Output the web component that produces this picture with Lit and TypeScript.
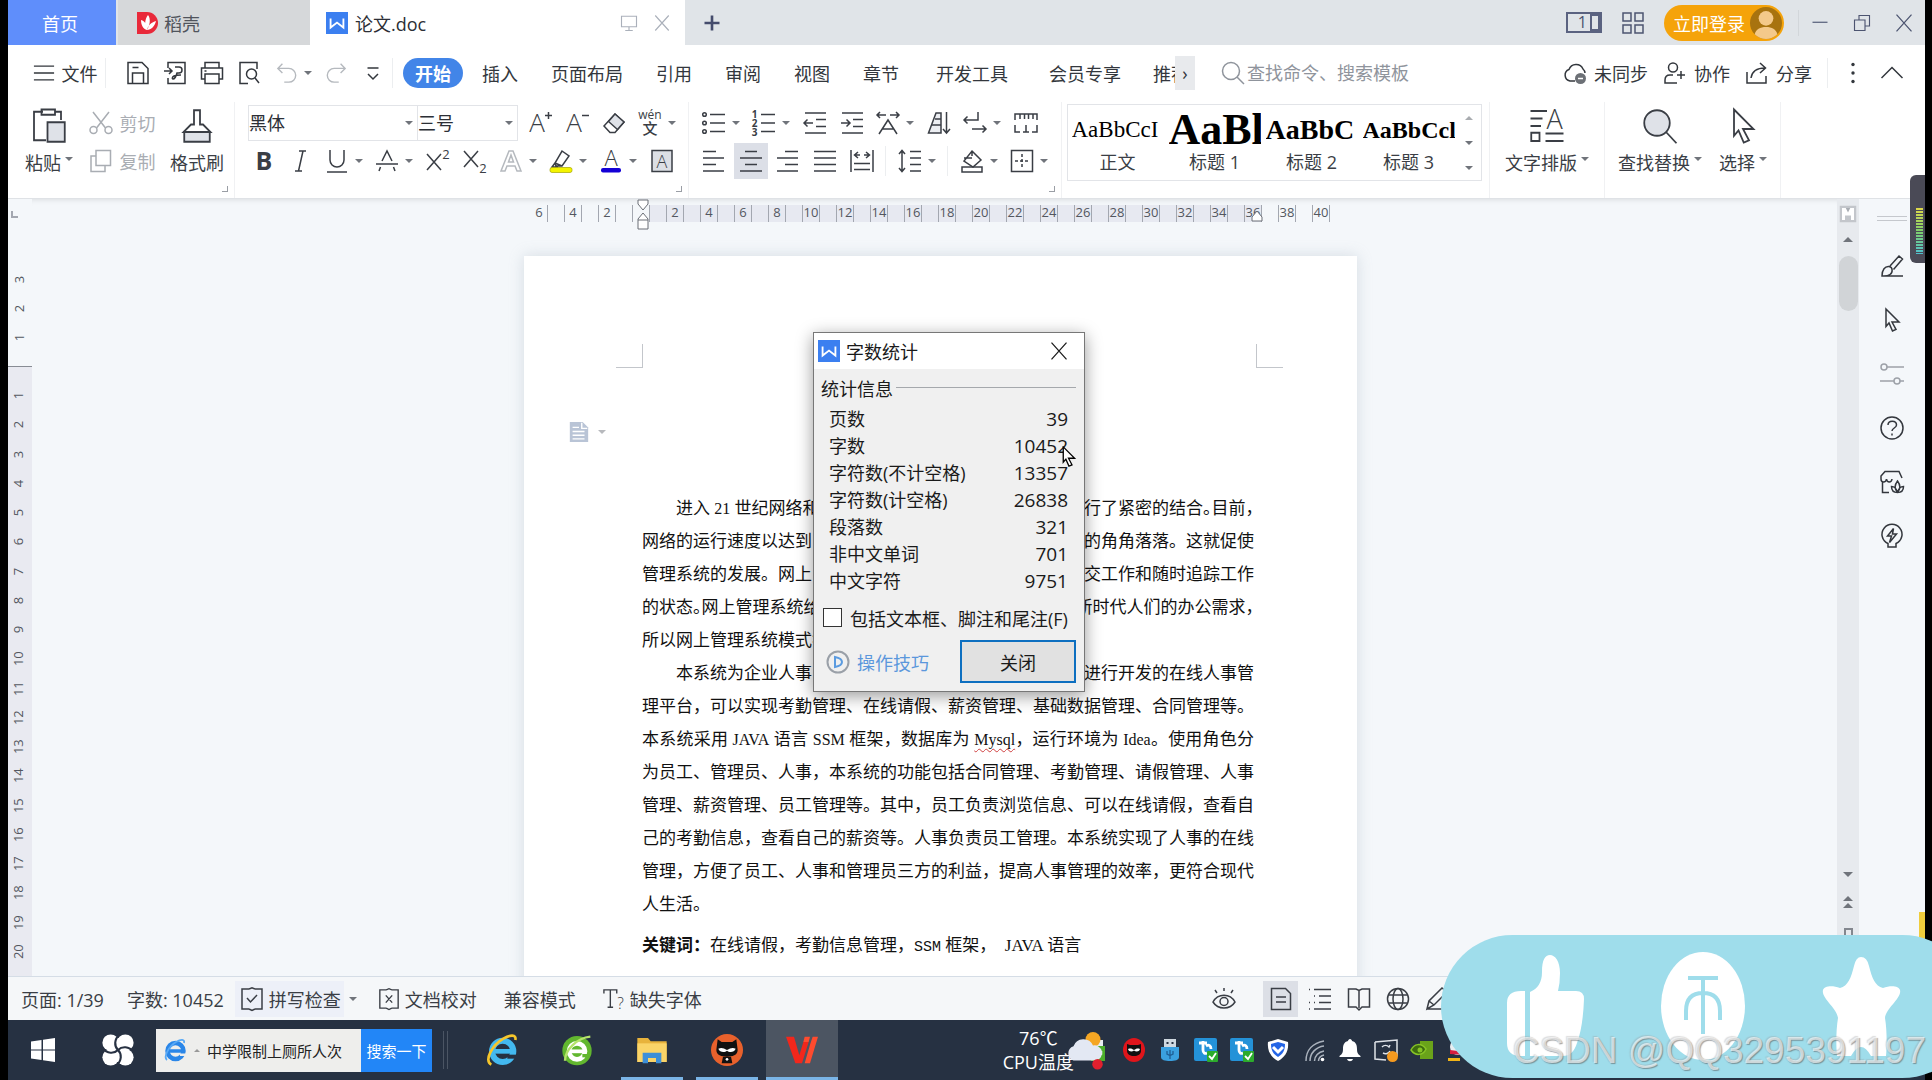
import { LitElement, html, css, svg, nothing, TemplateResult } from "lit";
import { customElement, property } from "lit/decorators.js";

const T = (x: number, y: number, size: number, s: string, extra = "") =>
  svg`<text class=${"gt " + extra} x=${x} y=${y} font-size=${size} text-anchor="middle">${s}</text>`;

const icons: Record<string, unknown> = {
  burger: svg`<path d="M1 4.500h22M1 12h22M1 19.500h22"/>`,
  save: svg`<path d="M2 1.500h14l6 6V22.500H2zM6.500 22V12h11v10M6.500 6.500h6"/>`,
  pdf: svg`<path d="M5 7V1.500h17v21H5V17M1 10h8M6 7l3 3-3 3M12 6h4a3 3 0 0 1 0 6h-2c-1 4-3 6-4 6s-1-2 1-3 4-1 7-1"/>`,
  print: svg`<path d="M5 7V1.500h14V7M5 18H1.500V7h21v11H19M5 13h14v9.500H5zM4.500 10h2"/>`,
  preview: svg`<path d="M20 8V1.500H3v21h8"/><circle cx="14.500" cy="13" r="5"/><path d="M18 17l4 5"/>`,
  undo: svg`<path d="M7 2L2 7l5 5M2 7h12a7 7 0 0 1 0 15H9"/>`,
  redo: svg`<path d="M17 2l5 5-5 5M22 7H10a7 7 0 0 0 0 15h5"/>`,
  more: svg`<path d="M6.500 7h11M7 13l5 5 5-5"/>`,
  search: svg`<circle cx="10" cy="10" r="8.500"/><path d="M16 16l7 7"/>`,
  cloud: svg`<path d="M12 20H7a6 6 0 0 1-1-11.500A7.500 7.500 0 0 1 20 8a6 6 0 0 1 2 4"/><circle cx="17.500" cy="17.500" r="5.500" fill="#6c7076" stroke="none"/><path d="M15 17.500h5" stroke="#fff"/>`,
  people: svg`<circle cx="10" cy="6.500" r="4.500"/><path d="M14 22H2v-3c0-3 2-5 5-5h3M18 10v8M14 14h8"/>`,
  share: svg`<path d="M2 11v11h19v-7M6 17c1-7 6-10 14-10M15 2l5.500 5-5.500 5"/>`,
  dots: svg`<g fill="currentColor" stroke="none"><circle cx="12" cy="3.500" r="1.700"/><circle cx="12" cy="12" r="1.700"/><circle cx="12" cy="20.500" r="1.700"/></g>`,
  chevUp: svg`<path d="M1.500 17L12 6.500 22.500 17"/>`,
  paste: svg`<path d="M8 2.500H2v19h8M16 2.500h4V8M7 1h9v3.500H7z"/><path d="M11 9.500h11.500v13H11z" fill="#dfe2e8"/>`,
  cut: svg`<path d="M4 1l12.500 16M20 1L7.500 17"/><circle cx="4.500" cy="19" r="3.500"/><circle cx="19.500" cy="19" r="3.500"/>`,
  copy: svg`<path d="M7 1.500h14.500v15H7z"/><path d="M7 7H2v15.500h14V17"/>`,
  brush: svg`<path d="M10 1.500h4V11h2l5 5H3l5-5h2z"/><path d="M3.500 16h17v6.500h-17z" fill="#dfe2e8"/>`,
  aPlus: svg`${T(9, 21, 26, "A")}<path d="M17 4.500h7M20.500 1v7"/>`,
  aMinus: svg`${T(9, 21, 26, "A")}<path d="M17 4.500h7"/>`,
  eraser: svg`<path d="M13 3l9 8-9 10.500H8L2 15z"/><path d="M13 3l9 8-6.500 7.500-9-8z" fill="#dfe2e8"/>`,
  wen: svg`${T(12, 8, 12, "wén", "md")}${T(12, 23, 15, "文", "md")}`,
  bold: T(12, 21, 25, "B", "bd"),
  italic: svg`<path d="M10 2h7M6 22h7M14 2L9.500 22"/>`,
  under: svg`<path d="M5 1v10a7 7 0 0 0 14 0V1M2 23h20"/>`,
  strike: svg`<path d="M7 12L12 2l5 10M1 15h22M5.500 18L4 22M18.500 18l1.500 4"/>`,
  sup: svg`<path d="M1 5l14 16M15 5L1 21"/>${T(20, 10, 13, "2", "md")}`,
  sub: svg`<path d="M1 2l14 16M15 2L1 18"/>${T(20, 24, 13, "2", "md")}`,
  outA: svg`<path d="M2 22L10 2h4l8 20h-4l-2-5H8l-2 5zM9.500 13h5L12 6z"/>`,
  hilite: svg`<path d="M13 2l7 5-7 10H7l-1-3zM6 14l7 3M6 14l-3 4h6"/><rect x="1" y="18.500" width="22" height="5" rx="2" fill="#f4f400" stroke="#a5a500" stroke-width=".7"/>`,
  fontColor: svg`${T(12, 17, 22, "A")}<rect x="2" y="19" width="20" height="4.500" rx="2" fill="#1400d6" stroke="none"/>`,
  boxA: svg`<rect x="2" y="1.500" width="20" height="21" fill="#dcdfe5"/>${T(12, 18.500, 18, "A")}`,
  bullets: svg`<circle cx="2.500" cy="3.500" r="1.800"/><circle cx="2.500" cy="12" r="1.800"/><circle cx="2.500" cy="20.500" r="1.800"/><path d="M8 3.500h15M8 12h15M8 20.500h15"/>`,
  numbers: svg`${T(2.500, 7, 10, "1", "bd")}${T(2.500, 16, 10, "2", "bd")}${T(2.500, 24.500, 10, "3", "bd")}<path d="M9 3.500h14M9 12h14M9 20.500h14"/>`,
  outdent: svg`<path d="M2 2h21M13 8.500h10M13 15.500h10M2 22h21M1 12h9M4.500 8.500L1 12l3.500 3.500"/>`,
  indent: svg`<path d="M2 2h21M13 8.500h10M13 15.500h10M2 22h21M1 12h9M6.500 8.500L10 12l-3.500 3.500"/>`,
  scaleA: svg`<path d="M1 4h9M14 4h9M4 1L1 4l3 3M20 1l3 3-3 3M3 23L12 9l9 14M6.500 18h11"/>`,
  sort: svg`<path d="M1.500 22L9 2h5v20z" fill="#eceef2"/><path d="M8 8h6M5 14h9M19.500 1v21M16 18l3.500 4 3.500-4"/>`,
  tabs: svg`<path d="M15 1v8H1M4.500 5.500L1 9l3.500 3.500M9 18h14M19.500 14.500L23 18l-3.500 3.500"/>`,
  rulerI: svg`<path d="M1 9V3h22v6M6 3v5M10.500 3v5M14.500 3v5M19 3v5M1 14v7h5M23 14v7h-5M9 21h6M12 14v7"/>`,
  aLeft: svg`<path d="M1 2.500h13M1 9h21M1 15.500h13M1 22h21"/>`,
  aCenter: svg`<path d="M6 2.500h12M1 9h22M6 15.500h12M1 22h22"/>`,
  aRight: svg`<path d="M9 2.500h13M1 9h21M9 15.500h13M1 22h21"/>`,
  aJust: svg`<path d="M1 2.500h22M1 9h22M1 15.500h22M1 22h22"/>`,
  aDist: svg`<path d="M1 1v22M23 1v22M4 14.500h16M4 20.500h16M5 6h5M14 6h5M8 3L4.500 6 8 9M16 3l3.500 3L16 9"/>`,
  lineSp: svg`<path d="M4 2v20M1 5l3-3.500L7 5M1 19l3 3.500L7 19M12 2.500h11M12 9h11M12 15.500h11M12 22h11"/>`,
  fill: svg`<path d="M12 2l9 9-8 7-9-6zM4 9h8M12 2v5"/><path d="M2 18h20v5H2z"/>`,
  border: svg`<rect x="1.500" y="1.500" width="21" height="21"/><path d="M12 5v14M5 12h14" stroke-dasharray="3 2"/>`,
  textLayout: svg`<path d="M1 2h11M1 7h8M1 12h7M1.500 16.500h5.500v5.500H1.500zM11 17h12M11 22h12"/>${T(17, 14, 18, "A")}`,
  find: svg`<circle cx="10" cy="10" r="8.500" fill="#dfe2e8"/><path d="M16 16l7 7.500"/>`,
  arrow: svg`<path d="M6 1l13 13h-7l4 7.500-3.500 1.500-3.500-8-3 3.500z"/>`,
  monitor: svg`<path d="M2 3h20v14H2zM12 17v5M7 22h10"/>`,
  close: svg`<path d="M3 2l18 20M21 2L3 22"/>`,
  plus: svg`<path d="M12 2v20M2 12h20" stroke-width="3.500"/>`,
  grid: svg`<path d="M2 2h8v8H2zM14 2h8v8h-8zM2 14h8v8H2zM14 14h8v8h-8z"/>`,
  min: svg`<path d="M2 11h20"/>`,
  restore: svg`<path d="M2 8h14v14H2zM8 8V2h14v14h-6"/>`,
  wdoc: svg`<path d="M0 0h24v24H0z" fill="#3b7ff0" stroke="none"/><path d="M5 7v10l7-5.500 7 5.500V7" stroke="#fff" stroke-width="2"/>`,
  docer: svg`<path d="M1 1h10a11 11 0 0 1 0 22H1z" fill="#e9293a" stroke="none"/><path d="M12 4c3 4 2 10-1 15-3-5-2-11 1-15zM5 9c4 1 6 5 6 10-4-1-6-5-6-10zM20 10c-4 1-8 4-9 9 4 0 8-4 9-9z" fill="#fff" stroke="none"/>`,
  avatar: svg`<circle cx="12" cy="12" r="12" fill="#a8730f" stroke="none"/><circle cx="12" cy="8.500" r="5.500" fill="#f4c98a" stroke="none"/><path d="M3.500 20.500c1-4 4-5.500 8.500-5.500s7.500 1.500 8.500 5.500A12 12 0 0 1 3.500 20.500z" fill="#f4c98a" stroke="none"/>`,
  pen: svg`<path d="M2 22h21M10 12L19 2l3.500 3L13.500 15.500M2 22c0-6 3-10 7-9.500s4 6 1 8-6 1.500-8 1.500z"/>`,
  sliders: svg`<circle cx="4" cy="5" r="3"/><path d="M7 5h17M0 19h14"/><circle cx="17" cy="19" r="3"/><path d="M20 19h4"/>`,
  help: svg`<circle cx="12" cy="12" r="11"/><path d="M8 9c0-5 8.500-5 8.500 0 0 3-4.500 3-4.500 6"/><path d="M12 17.500v2"/>`,
  shop: svg`<path d="M22 8l-3-6.500H5L1 6v3c0 4 5 4 5.500 0 .5 4 5 4 5.500 0M2.500 12v10.500H9"/><path d="M17.500 22c-3-3-3-7 0-11 3 4 3 8 0 11zM17.500 22.500c-4 0-6-2-6-6 3 0 5 2 6 6zM17.500 22.500c4 0 6-2 6-6-3 0-5 2-6 6z"/>`,
  bulb: svg`<path d="M8 23v-3.500a10 10 0 1 1 8 0V23zM13.500 4.500L7.500 12h4l-2 6.500 7-8.500h-4z"/>`,
  check: svg`<path d="M9 2H2v20h7M15 2h7v20h-7M9 22l3 1.500L15 22M9 2l3-1.200L15 2M7 11l3.500 4L17 8"/>`,
  proof: svg`<path d="M9 2H2v20h7M15 2h7v20h-7M9 22l3 1.500L15 22M9 2l3-1.200L15 2M8.500 8l7 8M15.500 8l-7 8"/>`,
  missing: svg`<path d="M1 6V2h14v4M8 2v19M5 21h6"/>${T(19, 23, 17, "?")}`,
  eye: svg`<path d="M1 15c5-9 17-9 22 0-5 8-17 8-22 0z"/><circle cx="12" cy="14.500" r="4"/><path d="M12 1v3M3 3l2 3M21 3l-2 3"/>`,
  page: svg`<path d="M2.500 1.500h14l5 5v16h-19zM7 10h10M7 15h10"/>`,
  list: svg`<path d="M1 2.500h1M6 2.500h17M6 9h1M11 9h12M1 15.500h1M6 15.500h1M11 15.500h12M1 22h1M6 22h17"/>`,
  book: svg`<path d="M12 3v18M1.500 2H9l3 1.500L15 2h7.500v18H15l-3 3-3-3H1.500z"/>`,
  globe: svg`<circle cx="12" cy="12" r="10.500"/><ellipse cx="12" cy="12" rx="5" ry="10.500"/><path d="M2.500 8h19M2.500 16h19"/>`,
  pencil: svg`<path d="M2 22h21M2 22l2-8L17 1l5 4L9 18zM4 14l5 4"/>`,
  play: svg`<circle cx="12" cy="12" r="10.500" stroke="#9aa0a8" stroke-width="2"/><path d="M9 7c5 1 7 3 7 5s-2 4-7 5z" stroke="#5b9be0" stroke-width="2"/>`,
  floatDoc: svg`<path d="M2 1h14l6 6v16H2z" fill="#b9c4d6" stroke="none"/><path d="M15 2v6h6M5 7h7M5 11.500h13M5 15.500h13M5 19.500h13" stroke="#fff"/>`,
  rulerBtn: svg`<rect x="1" y="1" width="22" height="22" fill="#c3c6cb" stroke="none"/><path d="M4 4h16v16h-4v-6H8v6H4z" fill="#fff" stroke="none"/><path d="M9 4h6l-3 6z" fill="#a9adb3" stroke="none"/>`,
  win: svg`<path d="M0 3.500l10.500-1.500V11.500H0zM12 1.800L24 0v11.500H12zM0 12.500h10.500V22L0 20.500zM12 12.500h12V24l-12-1.800z" fill="#fff" stroke="none"/>`,
  fan: svg`<g fill="#fff" stroke="none"><circle cx="6.500" cy="6.500" r="6.200"/><circle cx="17.500" cy="6.500" r="6.200"/><circle cx="17.500" cy="17.500" r="6.200"/><circle cx="6.500" cy="17.500" r="6.200"/><path d="M6 3h12v18H6z"/></g>
    <g stroke="#273142" stroke-width="1.600">${[0, 90, 180, 270].map((a) => svg`<path transform=${`rotate(${a} 12 12)`} d="M12 12C9 9 9 4 13.500 0"/>`)}</g>`,
  ie: svg`<ellipse cx="12.500" cy="13" rx="8" ry="8" stroke="#43b9f0" stroke-width="4.500"/><path d="M6 13h16" stroke="#43b9f0" stroke-width="3.500"/><path d="M16 15.500h8v3h-8z" fill="#273142" stroke="none"/><path d="M4 23C-2 20 5 8 13 3.500c5-3 10-3.500 9 1" stroke="#f6c62b" stroke-width="2"/>`,
  ieLite: svg`<ellipse cx="12.500" cy="13" rx="8" ry="8" stroke="#2a86e8" stroke-width="4.500"/><path d="M6 13h16" stroke="#2a86e8" stroke-width="3.500"/><path d="M17 15.500h7v2.500h-7z" fill="#eeeeec" stroke="none"/><path d="M4 22C0 19 6 8 13 4c5-3 9-3 8 1" stroke="#58a9f5" stroke-width="1.800"/>`,
  ge: svg`<circle cx="12" cy="12.500" r="11" fill="#62b72f" stroke="none"/><circle cx="12" cy="13" r="6" stroke="#fff" stroke-width="3.500"/><path d="M7 13h12" stroke="#fff" stroke-width="2.800"/><path d="M16 15h5v2.500h-5z" fill="#62b72f" stroke="none"/><path d="M3 20C3 12 12 3 22 2" stroke="#b5e36b" stroke-width="1.800"/>`,
  folder: svg`<path d="M1 3h8l2 2.500h12V21H1z" fill="#e8b33c" stroke="none"/><path d="M1 7h22v14H1z" fill="#fad468" stroke="none"/><path d="M5 22v-8h14v8h-4v-4H9v4z" fill="#3d8fd8" stroke="none"/>`,
  cat: svg`<ellipse cx="12" cy="12" rx="12" ry="12" fill="#e8612c" stroke="none"/><path d="M5 4l3 2h8l3-2 1 8c0 4-4 5-8 5s-8-1-8-5z" fill="#111" stroke="none"/><path d="M5.500 11c3-1 4 0 6.500 1 2.500-1 3.500-2 6.500-1-1 3-5 3-6.500 1.500C10.500 14 6.500 14 5.500 11z" fill="#fff" stroke="none"/><path d="M9 17h6l1 5H8z" fill="#111" stroke="none"/><circle cx="12" cy="19" r="1" fill="#fff" stroke="none"/>`,
  wps: svg`<path d="M0 2h6l4 14 3-10h4l-5 16H7z" fill="#f2271c" stroke="none"/><path d="M14 2h4l-1 4h-4zM18 8l2-6h4l-6 20h-4z" fill="#ff4b2e" stroke="none"/>`,
  weather: svg`<circle cx="18" cy="5" r="5" fill="#f5a623" stroke="none"/><path d="M5 19a5 5 0 0 1 0-9.500A7 7 0 0 1 18 9a5 5 0 0 1 2 10z" fill="#e3e8f3" stroke="none"/><circle cx="21" cy="21.500" r="3.500" fill="#e0202e" stroke="none"/>`,
  usbG: svg`<path d="M7 2h10v6H7z" fill="#e9edf0" stroke="none"/><path d="M5 8h14v15H5z" fill="#4caf2c" stroke="none"/><path d="M12 20v-9M8.500 13v3l3.500 2 3.500-2v-3" stroke="#fff"/>`,
  red: svg`<ellipse cx="12" cy="12" rx="11" ry="12" fill="#e0151b" stroke="none"/><path d="M5 6l3 1h8l3-1v7c0 3-3 5-7 5s-7-2-7-5z" fill="#111" stroke="none"/><path d="M6 11c3-1 4 0 6 1 2-1 3-2 6-1-1 3-4 3-6 1.500C10 14 7 14 6 11z" fill="#fff" stroke="none"/>`,
  usbB: svg`<path d="M6 1h12v8H6z" fill="#cfd8e0" stroke="none"/><path d="M8.500 4h2v2h-2zM13.500 4h2v2h-2z" fill="#273142" stroke="none"/><path d="M3 9h18v10c0 3-4 4-9 4s-9-1-9-4z" fill="#3aa0e0" stroke="none"/><path d="M12 21v-9M9 13v3l3 1.500 3-1.500v-3" stroke="#1f5f96" stroke-width="1.300"/>`,
  tBlue: svg`<rect x="0" y="0" width="23" height="23" rx="2" fill="#2492d8" stroke="none"/><path d="M5 5h8M9 3v9c0 3 2 4 4 3M12 8c3-2 5 0 5 3" stroke="#fff" stroke-width="2.800"/><rect x="13" y="13" width="11" height="11" rx="1" fill="#2cab2c" stroke="none"/><path d="M15 18l3 3 4-6" stroke="#fff" stroke-width="1.800"/>`,
  shield: svg`<path d="M12 1l10 3c1 9-3 15-10 19C5 19 1 13 2 4z" fill="#fff" stroke="none"/><path d="M12 4l7 2c0 6-2 10-7 13-5-3-7-7-7-13z" fill="#2465e6" stroke="none"/><path d="M7 9l5 5 5-5" stroke="#fff" stroke-width="3"/>`,
  wifi: svg`<path d="M4 23C4 12 11 5 22 3M8 23C8 15 14 9 22 8M12.500 23c0-5 4-9 9.500-10M16.500 23c0-3 2-5 5.500-6" stroke="#aab2bd"/><circle cx="20.500" cy="21.500" r="1.800" fill="#fff" stroke="none"/>`,
  bell: svg`<path d="M12 1c1 0 2 1 2 2 4 1 5 4 5 8 0 4 1 5 3.500 7v1h-21v-1C4 16 5 15 5 11c0-4 1-7 5-8 0-1 1-2 2-2zM9 21h6c-1 3-5 3-6 0z" fill="#fff" stroke="none"/>`,
  sync: svg`<path d="M1 4l22-2v16M1 4v17l11 1M8 9a5 5 0 0 1 7 0l1-2M16 13a5 5 0 0 1-7 2" stroke="#dfe3e8"/><circle cx="18.500" cy="18.500" r="5.500" fill="#f59a1f" stroke="none"/>`,
  nv: svg`<path d="M10 3h13v18H10z" fill="#6aa31a" stroke="none"/><path d="M1 12c3-6 10-8 15-1-3 7-11 7-15 1z" fill="#3d6b0f" stroke="#86c425"/><circle cx="10" cy="12" r="2.500" fill="#86c425" stroke="none"/>`,
  qq: svg`<circle cx="12" cy="9" r="8" fill="#e8eef2" stroke="none"/><path d="M4 12l16 2v3L4 16z" fill="#d81e3f" stroke="none"/><path d="M2 20h12v3H2z" fill="#f2b417" stroke="none"/>`,
};

const icon = (name: string, size = "") =>
  html`<svg class=${"ic " + size} viewBox="0 0 24 24" aria-hidden="true">${icons[name]}</svg>`;

const shared = css`
  * { box-sizing: border-box; }
  .ic { width: 24px; height: 24px; flex: none; fill: none; stroke: currentColor; stroke-width: 1.500; display: block; overflow: visible; }
  .s16 { width: 16px; height: 16px; }
  .s18 { width: 18px; height: 18px; }
  .s20 { width: 20px; height: 20px; }
  .s22 { width: 22px; height: 22px; }
  .s28 { width: 28px; height: 28px; }
  .s32 { width: 32px; height: 32px; }
  .s36 { width: 36px; height: 36px; stroke-width: 1.200; }
  .gt { fill: currentColor; stroke: none; font-family: "Open Sans", "Noto Sans CJK SC", sans-serif; font-weight: 300; }
  .gt.md { font-weight: 500; }
  .gt.bd { font-weight: 700; }
  button, select, input { font: inherit; color: inherit; margin: 0; }
  button { border: 0; background: none; padding: 0; display: flex; align-items: center; justify-content: center; white-space: nowrap; }
  .caret { flex: none; width: 0; height: 0; border: 4px solid transparent; border-top-color: #70747b; border-bottom: 0; }
  .sep { flex: none; width: 1px; background: #eceef0; }
`;

@customElement("wp-title-bar")
class TitleBar extends LitElement {
  static styles = [shared, css`
    :host { display: flex; height: 45px; background: #e0e4e8; color: #4c5470; }
    .tab { height: 45px; font-size: 18px; }
    .home { width: 108px; background: #5f8efb; color: #fff; padding-right: 4px; }
    .docer { width: 192px; margin-left: 2px; padding-left: 18px; gap: 4px; background: #d6d8da; justify-content: flex-start; color: #50545c; }
    .doc { width: 375px; background: #fff; display: flex; align-items: center; padding: 0 14px 0 16px; color: #2c2f36; }
    .doc span { margin-left: 7px; flex: 1; }
    .doc button { margin-left: 15px; color: #aab0ba; }
    .add { margin-left: 18px; color: #454c6c; }
    .fill { flex: 1; }
    .right { display: flex; align-items: center; }
    .count { width: 36px; height: 21px; border: 2px solid #5a6280; font-size: 16px; justify-content: flex-end; line-height: 17px; }
    .count i { width: 10px; height: 17px; border: 2px solid #5a6280; margin-left: 3px; }
    .gridb { margin-left: 19px; }
    .login { margin: 0 14px 0 19px; height: 36px; border-radius: 18px; background: #f5a30a; color: #fff; font-size: 18px; padding: 0 2px 0 9px; gap: 5px; }
    .winb { width: 42px; }
    .close { padding-right: 1px; }
    .sep { height: 26px; background: #d2d6da; }
  `];
  render() {
    return html`
      <button class="tab home">首页</button>
      <button class="tab docer">${icon("docer")}稻壳</button>
      <div class="tab doc">${icon("wdoc", "s22")}<span>论文.doc</span>
        <button aria-label="窗口">${icon("monitor", "s18")}</button>
        <button aria-label="关闭标签">${icon("close", "s18")}</button></div>
      <button class="add" aria-label="新建">${icon("plus", "s18")}</button>
      <div class="fill"></div>
      <div class="right">
        <button class="count" aria-label="窗口数">1<i></i></button>
        <button class="gridb" aria-label="应用">${icon("grid")}</button>
        <button class="login">立即登录${icon("avatar", "s32")}</button>
        <span class="sep"></span>
        <button class="winb" aria-label="最小化">${icon("min", "s18")}</button>
        <button class="winb" aria-label="还原">${icon("restore", "s18")}</button>
        <button class="winb close" aria-label="关闭">${icon("close", "s20")}</button>
      </div>`;
  }
}

@customElement("wp-menu-bar")
class MenuBar extends LitElement {
  static styles = [shared, css`
    :host { display: flex; align-items: center; height: 57px; background: #fff; font-size: 18px; color: #33373d; padding-bottom: 2px; }
    .file { margin-left: 17px; gap: 7px; width: 80px; }
    .quick { display: flex; padding-left: 13px; width: 286px; }
    .sep { height: 30px; }
    .quick button { width: 37px; }
    .quick .ud { gap: 6px; padding-left: 3px; width: 50px; color: #b5b9be; }
    .quick .rd { color: #b5b9be; }
    .on { flex: none; width: 60px; height: 30px; border-radius: 15px; background: #4285e8; color: #fff; font-weight: 700; margin: 0 3px 0 10px; }
    .tabs { display: flex; gap: 1px; }
    .tab { padding: 0 16px; height: 34px; }
    .wide { padding: 0 20px; }
    .cut { flex: none; width: 34px; padding: 0 0 0 12px; overflow: hidden; justify-content: flex-start; }
    .next { flex: none; width: 20px; height: 34px; background: #e8eaed; }
    .search { display: flex; align-items: center; gap: 2px; margin-left: 26px; color: #8f949c; }
    .search input { border: 0; outline: 0; width: 200px; padding: 0; background: none; }
    .search input::placeholder { color: #8f949c; opacity: 1; }
    .fill { flex: 1; }
    .act { gap: 7px; margin-right: 15px; }
    .dots { width: 50px; }
    .up { width: 28px; margin-right: 19px; }
  `];
  render() {
    const q = [["save", "保存"], ["pdf", "输出PDF"], ["print", "打印"], ["preview", "预览"]];
    return html`
      <button class="file">${icon("burger", "s22")}文件</button><span class="sep"></span>
      <div class="quick">
        ${q.map(([n, l]) => html`<button aria-label=${l}>${icon(n)}</button>`)}
        <button class="ud" aria-label="撤销">${icon("undo", "s22")}<i class="caret"></i></button>
        <button class="rd" aria-label="恢复">${icon("redo", "s22")}</button>
        <button aria-label="更多">${icon("more")}</button>
      </div><span class="sep"></span>
      <button class="on">开始</button>
      <div class="tabs">
        ${["插入", "页面布局", "引用", "审阅", "视图", "章节"].map((t) => html`<button class="tab">${t}</button>`)}
        ${["开发工具", "会员专享"].map((t) => html`<button class="tab wide">${t}</button>`)}
      </div>
      <button class="tab cut">推荐</button>
      <button class="next" aria-label="更多选项卡">›</button>
      <label class="search">${icon("search")}<input placeholder="查找命令、搜索模板" aria-label="搜索" /></label>
      <div class="fill"></div>
      <button class="act">${icon("cloud")}未同步</button>
      <button class="act">${icon("people")}协作</button>
      <button class="act">${icon("share")}分享</button>
      <span class="sep"></span>
      <button class="dots" aria-label="更多">${icon("dots")}</button>
      <button class="up" aria-label="收起">${icon("chevUp")}</button>`;
  }
}

@customElement("wp-ribbon")
class Ribbon extends LitElement {
  static styles = [shared, css`
    :host { display: flex; height: 97px; background: #fff; color: #3a3e45; font-size: 18px; border-bottom: 1px solid #dfe2e6; }
    .group { display: flex; border-right: 1px solid #f0f1f3; position: relative; flex: none; }
    .corner { position: absolute; right: 6px; bottom: 6px; width: 6px; height: 6px; border: solid #9a9ea5; border-width: 0 1px 1px 0; }
    .big { flex-direction: column; justify-content: flex-start; padding-top: 4px; }
    .big .pic { height: 40px; display: flex; align-items: center; }
    .big .lab { height: 32px; display: flex; align-items: center; gap: 4px; }
    .big .lab .caret { margin-bottom: 6px; }
    .clip { width: 227px; padding-left: 17px; }
    .pair { width: 66px; margin: 0 15px 0 16px; }
    .pair button { height: 38px; gap: 7px; color: #a9adb3; }
    .rows { display: flex; flex-direction: column; padding-top: 2px; }
    .row { display: flex; height: 38px; align-items: center; }
    .font { width: 454px; padding-left: 10px; }
    .para { width: 373px; padding-left: 6px; }
    .first { padding-left: 1px; }
    .t { width: 37px; height: 36px; }
    .td { width: 50px; height: 36px; padding-left: 6px; justify-content: flex-start; gap: 6px; }
    .off { color: #b5b9be; }
    .sel { background: #dcdfe7; width: 34px; margin: 0 1px 0 2px; }
    .sep { height: 30px; margin: 0 6px 0 5px; }
    .pick { position: relative; display: flex; align-items: center; height: 36px; border: 1px solid #e2e4e8; margin-right: -1px; }
    .pick select { appearance: none; border: 0; background: none; outline: 0; padding: 0; height: 34px; width: 100%; color: #2c2f36; }
    .pick .caret { position: absolute; right: 4px; pointer-events: none; }
    .family { width: 170px; margin-left: 3px; }
    .size { width: 101px; }
    .row .pick.size { margin-right: 3px; }
    .styles { width: 428px; padding: 2px 0 0 5px; }
    .gallery { display: flex; height: 77px; width: 415px; border: 1px solid #e2e4e8; padding: 1px 0 0 1px; }
    .card { width: 97px; flex-direction: column; justify-content: flex-start; padding-top: 4px; }
    .demo { display: block; width: 92px; height: 40px; overflow: hidden; text-align: left; line-height: 40px; color: #000; font-family: "Liberation Serif", serif; }
    .n0 { font-size: 23px; }
    .n1 { font-size: 44px; font-weight: 700; }
    .n2 { font-size: 28px; font-weight: 700; }
    .n3 { font-size: 24px; font-weight: 700; }
    .name { line-height: 24px; }
    .scroll { flex: 1; display: flex; flex-direction: column; justify-content: space-around; align-items: center; }
    .scroll .up { transform: rotate(180deg); opacity: .6; }
    .lay { width: 115px; }
    .find { width: 176px; gap: 17px; padding-left: 13px; }
    .lay .big { width: 100%; }
  `];
  private t(n: string, label: string, cls = "") {
    return html`<button class=${"t " + cls} aria-label=${label}>${icon(n)}</button>`;
  }
  private td(n: string, label: string, cls = "") {
    return html`<button class=${"td " + cls} aria-label=${label}>${icon(n)}<i class="caret"></i></button>`;
  }
  private big(n: string, label: string, caret: boolean) {
    return html`<button class="big"><span class="pic">${icon(n, "s36")}</span>
      <span class="lab">${label}${caret ? html`<i class="caret"></i>` : nothing}</span></button>`;
  }
  render() {
    const st = [["正文", "AaBbCcI"], ["标题 1", "AaBl"], ["标题 2", "AaBbC"], ["标题 3", "AaBbCcl"]];
    return html`
      <div class="group clip">
        ${this.big("paste", "粘贴", true)}
        <div class="rows pair"><button>${icon("cut")}剪切</button><button>${icon("copy")}复制</button></div>
        ${this.big("brush", "格式刷", false)}<i class="corner"></i>
      </div>
      <div class="group font"><div class="rows">
        <div class="row">
          <label class="pick family"><select aria-label="字体"><option>黑体</option></select><i class="caret"></i></label>
          <label class="pick size"><select aria-label="字号"><option>三号</option></select><i class="caret"></i></label>
          ${this.t("aPlus", "增大字号")}${this.t("aMinus", "减小字号")}${this.t("eraser", "清除格式")}${this.td("wen", "拼音指南")}
        </div>
        <div class="row">
          ${this.t("bold", "加粗")}${this.t("italic", "倾斜")}${this.td("under", "下划线")}${this.td("strike", "删除线")}
          ${this.t("sup", "上标")}${this.t("sub", "下标")}${this.td("outA", "文字效果", "off")}
          ${this.td("hilite", "突出显示")}${this.td("fontColor", "字体颜色")}${this.t("boxA", "字符底纹")}
        </div></div><i class="corner"></i>
      </div>
      <div class="group para"><div class="rows">
        <div class="row first">
          ${this.td("bullets", "项目符号")}${this.td("numbers", "编号")}${this.t("outdent", "减少缩进")}${this.t("indent", "增加缩进")}
          ${this.td("scaleA", "中文版式")}${this.t("sort", "排序")}${this.td("tabs", "显示标记")}${this.t("rulerI", "制表位")}
        </div>
        <div class="row">
          ${this.t("aLeft", "左对齐")}${this.t("aCenter", "居中", "sel")}${this.t("aRight", "右对齐")}${this.t("aJust", "两端对齐")}${this.t("aDist", "分散对齐")}
          <span class="sep"></span>${this.td("lineSp", "行距")}<span class="sep"></span>${this.td("fill", "底纹颜色")}${this.td("border", "边框")}
        </div></div><i class="corner"></i>
      </div>
      <div class="group styles"><div class="gallery">
        ${st.map(([s, d], i) => html`<button class="card"><span class=${"demo n" + i}>${d}</span><span class="name">${s}</span></button>`)}
        <div class="scroll"><i class="caret up"></i><i class="caret"></i><i class="caret"></i></div>
      </div></div>
      <div class="group lay">${this.big("textLayout", "文字排版", true)}</div>
      <div class="group find">${this.big("find", "查找替换", true)}${this.big("arrow", "选择", true)}</div>`;
  }
}

interface Line { l: TemplateResult | string; r?: TemplateResult | string; cls?: string }
const lat = (s: string) => html`<span class="lat">${s}</span>`;
const half = (s: string) => html`<span class="half">${s}</span>`;

const lines: Line[] = [
  { l: html`进入 ${lat("21")} 世纪网络和`, r: html`行了紧密的结合${half("。")}目前${half("，")}`, cls: "in" },
  { l: "网络的运行速度以达到", r: "的角角落落。这就促使" },
  { l: "管理系统的发展。网上", r: "交工作和随时追踪工作" },
  { l: html`的状态${half("。")}网上管理系统给`, r: html`新时代人们的办公需求${half("，")}` },
  { l: "所以网上管理系统模式符" },
  { l: "本系统为企业人事", r: "进行开发的在线人事管", cls: "in" },
  { l: "理平台，可以实现考勤管理、在线请假、薪资管理、基础数据管理、合同管理等。", cls: "full" },
  { l: html`本系统采用 ${lat("JAVA")} 语言 ${lat("SSM")} 框架，数据库为 <span class="lat wavy">Mysql</span>，运行环境为 ${lat("Idea")}。使用角色分`, cls: "full" },
  { l: "为员工、管理员、人事，本系统的功能包括合同管理、考勤管理、请假管理、人事", cls: "full" },
  { l: "管理、薪资管理、员工管理等。其中，员工负责浏览信息、可以在线请假，查看自", cls: "full" },
  { l: "己的考勤信息，查看自己的薪资等。人事负责员工管理。本系统实现了人事的在线", cls: "full" },
  { l: "管理，方便了员工、人事和管理员三方的利益，提高人事管理的效率，更符合现代", cls: "full" },
  { l: "人生活。" },
];

@customElement("wp-document")
class Doc extends LitElement {
  static styles = [shared, css`
    :host { flex: 1; min-width: 0; padding-left: 12px; display: flex; flex-direction: column; align-items: center; background: #f4f7fa; overflow: hidden; box-shadow: inset 0 6px 6px -6px #0002; }
    .ruler { flex: none; width: 833px; height: 57px; padding: 6px 0 0 7px; display: flex; position: relative; align-items: flex-start; }
    .cell { flex: none; width: 17px; height: 17px; display: flex; justify-content: center; border-right: 1px solid #a3a7b0; font: 13px/15px "Open Sans", sans-serif; color: #53575f; }
    .body { background: #e7e9f1; }
    .mark { position: absolute; stroke: #6a6e76; fill: #fff; }
    .m1 { left: 113px; top: 0; width: 12px; height: 32px; }
    .m2 { left: 727px; top: 11px; width: 12px; height: 12px; }
    .page { flex: none; position: relative; width: 833px; min-height: 760px; background: #fff; box-shadow: 0 0 14px #8fa0b04d; padding: 88px 74px 0 92px; }
    .crops { display: flex; justify-content: space-between; margin-bottom: 124px; }
    .crops i { width: 27px; height: 24px; border: solid #c3c6cb; border-width: 0 1px 1px 0; }
    .crops .r { border-width: 0 0 1px 1px; }
    .text { width: 612px; margin-left: 26px; font: 17px/33px "Liberation Serif", "Noto Sans CJK SC", sans-serif; color: #111; }
    .line { display: flex; justify-content: space-between; height: 33px; white-space: nowrap; }
    .in { padding-left: 34px; }
    .full { display: block; text-align: justify; text-align-last: justify; }
    .lat { font-size: 16px; }
    .mono { font: 15px/33px "Liberation Mono", monospace; }
    .half { font-feature-settings: "halt"; }
    .wavy { text-decoration: underline wavy #d04040 1px; text-underline-offset: 3px; }
    .keys { margin-top: 8px; height: 33px; white-space: pre; }
    .float { position: absolute; left: 44px; top: 165px; gap: 8px; }
    .float .caret { opacity: .5; }
  `];
  render() {
    const cells = Array.from({ length: 47 }, (_, i) => i - 6);
    return html`
      <div class="ruler">
        ${cells.map((n) => html`<span class=${"cell" + (n > 0 && n < 37 ? " body" : "")}>${n % 2 === 0 && n !== 0 ? Math.abs(n) : nothing}</span>`)}
        <svg class="mark m1" viewBox="0 0 12 32"><path d="M1 1h10v4L6 11 1 5zM6 14l5 6v10H1V20zM1 21h10"/></svg>
        <svg class="mark m2" viewBox="0 0 12 12"><path d="M6 1l5 6v4H1V7z"/></svg>
      </div>
      <article class="page">
        <div class="crops"><i></i><i class="r"></i></div>
        <button class="float" aria-label="段落布局">${icon("floatDoc", "s22")}<i class="caret"></i></button>
        <div class="text" lang="zh-CN">
          ${lines.map((x) => html`<div class=${"line " + (x.cls ?? "")}>${x.cls === "full" ? x.l : html`<span>${x.l}</span>${x.r ? html`<span>${x.r}</span>` : nothing}`}</div>`)}
          <div class="keys"><b>关键词：</b>在线请假，考勤信息管理，<span class="mono">SSM</span> 框架，  JAVA 语言</div>
        </div>
      </article>`;
  }
}

@customElement("wp-workspace")
class Workspace extends LitElement {
  static styles = [shared, css`
    :host { flex: 1; min-height: 0; display: flex; background: #f4f7fa; color: #33373d; border-bottom: 1px solid #d5dde6; }
    .vr { width: 24px; flex: none; display: flex; flex-direction: column; font: 13px/16px "Open Sans", sans-serif; color: #53575f; }
    .l { width: 7px; height: 7px; margin: 12px 0 0 3px; border: solid #a3a7b0; border-width: 0 0 2px 2px; }
    .neg { display: grid; grid-auto-rows: 29px; padding: 47px 0 14px; }
    .pos { flex: 1; border-top: 1px solid #888c94; background: #e9eaf1; display: grid; grid-template-rows: repeat(20, 1fr); padding: 14px 0 10px; }
    .neg span, .pos span { display: flex; align-items: center; justify-content: center; padding-bottom: 4px; transform: rotate(-90deg); }
    .sb { width: 22px; flex: none; background: #e7eaee; display: flex; flex-direction: column; align-items: center; padding: 6px 0 39px; color: #83878e; }
    .sb .caret { border-width: 5px; border-bottom: 0; }
    .sb .up { transform: rotate(180deg); margin: 14px 0; }
    .thumb { width: 19px; height: 55px; border-radius: 10px; background: #d1d4d7; }
    .grow { flex: 1; }
    .sb .twin { margin: 0; }
    .dbl { margin: 19px 0 20px; display: grid; gap: 2px; }
    .sq { width: 9px; height: 9px; border: 2px solid #83878e; }
    .side { width: 66px; flex: none; display: flex; flex-direction: column; align-items: center; gap: 30px; }
    .side .grip { width: 30px; height: 5px; border: solid #c5c8cd; border-width: 1px 0; margin: 17px 0 3px; }
    .side .dim { color: #9da1a8; }
    .s { height: 24px; }
  `];
  render() {
    return html`
      <div class="vr"><i class="l"></i>
        <div class="neg">${[3, 2, 1].map((n) => html`<span>${n}</span>`)}</div>
        <div class="pos">${Array.from({ length: 20 }, (_, i) => html`<span>${i + 1}</span>`)}</div>
      </div>
      <wp-document></wp-document>
      <div class="sb">${icon("rulerBtn", "s18")}<i class="caret up"></i><div class="thumb"></div><div class="grow"></div>
        <i class="caret"></i><div class="dbl"><i class="caret up twin"></i><i class="caret up twin"></i></div><i class="sq"></i></div>
      <nav class="side"><i class="grip"></i>
        ${[["pen", "样式"], ["arrow", "选择"], ["sliders", "设置"], ["help", "帮助"], ["shop", "稻壳资源"], ["bulb", "技巧"]].map(
          ([n, l]) => html`<button class=${n === "sliders" ? "s dim" : "s"} aria-label=${l}>${icon(n)}</button>`)}
      </nav>`;
  }
}

@customElement("wp-status-bar")
class StatusBar extends LitElement {
  static styles = [shared, css`
    :host { display: flex; align-items: center; height: 43px; background: #f5f7f9; color: #3a3e45; font-size: 18px; padding-left: 13px; }
    button { gap: 5px; height: 36px; }
    .p { margin-right: 23px; }
    .n { margin-right: 11px; }
    .sp { background: #edf0f8; padding: 0 3px 0 5px; }
    .c { margin: 0 21px 0 5px; }
    .m { margin: 0 27px; }
    .fill { flex: 1; }
    .v { width: 35px; margin: 0 2px; }
    .eye { margin-right: 20px; }
    .on { background: #dcdfe6; }
    .views { display: flex; padding-right: 469px; }
  `];
  render() {
    return html`
      <button class="p">页面: 1/39</button><button class="n">字数: 10452</button>
      <button class="sp">${icon("check")}拼写检查</button><i class="caret c"></i>
      <button>${icon("proof", "s22")}文档校对</button>
      <button class="m">兼容模式</button>
      <button>${icon("missing", "s22")}缺失字体</button>
      <div class="fill"></div>
      <div class="views">
        ${[["eye", "护眼"], ["page", "页面视图"], ["list", "大纲"], ["book", "阅读"], ["globe", "Web版式"], ["pencil", "写作模式"]].map(
          ([n, l]) => html`<button class=${"v" + (n === "eye" ? " eye" : n === "page" ? " on" : "")} aria-label=${l}>${icon(n)}</button>`)}
      </div>`;
  }
}

@customElement("wp-taskbar")
class Taskbar extends LitElement {
  static styles = [shared, css`
    :host { display: flex; height: 60px; background: #263142; color: #fff; font-size: 18px; padding-left: 20px; }
    .start { width: 30px; }
    .fan { width: 36px; margin: 0 20px 0 42px; }
    .box { display: flex; align-self: center; height: 43px; }
    .box label { display: flex; align-items: center; width: 205px; background: #eeeeec; padding-left: 7px; gap: 7px; }
    .box input { border: 0; outline: 0; background: none; color: #222; font-size: 15px; width: 150px; padding: 0; }
    .box label .caret { border-top-color: #999; border-width: 3px; border-bottom: 0; transform: rotate(180deg); }
    .box button { width: 71px; background: #2286f7; color: #fff; font-size: 15px; }
    .bar { width: 5px; height: 38px; border: solid #4b5564; border-width: 0 1px; align-self: center; margin: 0 18px 0 11px; }
    .apps { display: flex; gap: 3px; }
    .app { width: 72px; border-bottom: 3px solid transparent; padding-top: 3px; }
    .run { border-image: linear-gradient(90deg, transparent 8%, #7ab4e6 8% 92%, transparent 92%) 1; }
    .on { background: #4c5562; border-color: #7ab4e6; }
    .fill { flex: 1; }
    .cpu { text-align: center; line-height: 24px; align-self: center; white-space: nowrap; }
    .tray { display: flex; align-items: center; padding-right: 455px; gap: 12px; }
    .weather { display: flex; position: relative; z-index: 1; margin: 0 -28px 0 -8px; }
  `];
  render() {
    const apps = [["ie", "IE", ""], ["ge", "浏览器", ""], ["folder", "文件夹", "run"], ["cat", "助手", "run"], ["wps", "WPS", "on"]];
    return html`
      <button class="start" aria-label="开始">${icon("win")}</button>
      <button class="fan" aria-label="桌面">${icon("fan", "s32")}</button>
      <div class="box"><label>${icon("ieLite")}<i class="caret"></i><input aria-label="网页搜索" value="中学限制上厕所人次" /></label><button>搜索一下</button></div>
      <span class="bar"></span>
      <div class="apps">${apps.map(([n, l, c]) => html`<button class=${"app " + c} aria-label=${l}>${icon(n, "s32")}</button>`)}</div>
      <div class="fill"></div>
      <div class="cpu">76℃<br />CPU温度</div>
      <div class="tray">
        <span class="weather">${icon("weather", "s36")}</span>
        ${["usbG", "red", "usbB", "tBlue", "tBlue", "shield", "wifi", "bell", "sync", "nv", "qq"].map((n) => icon(n))}
      </div>`;
  }
}

@customElement("wp-count-dialog")
class CountDialog extends LitElement {
  @property({ attribute: false }) rows: [string, string][] = [
    ["页数", "39"], ["字数", "10452"], ["字符数(不计空格)", "13357"], ["字符数(计空格)", "26838"],
    ["段落数", "321"], ["非中文单词", "701"], ["中文字符", "9751"],
  ];
  static styles = [shared, css`
    :host { display: block; width: 272px; background: #f0f0f0; border: 1px solid #777; box-shadow: 0 4px 16px #0006; font-size: 18px; color: #1a1a1a; white-space: nowrap; }
    header { display: flex; align-items: center; height: 36px; background: #fff; padding: 0 15px 0 4px; gap: 6px; }
    h2 { margin: 0; font-size: 18px; font-weight: 400; flex: 1; }
    .body { padding: 5px 8px 8px 7px; }
    .legend { display: flex; align-items: center; gap: 3px; height: 27px; }
    .legend hr { flex: 1; margin: 0; border: 0; border-top: 1px solid #a5a8ac; }
    table { width: 100%; border-collapse: collapse; margin: 5px 0 9px; }
    th, td { padding: 0; height: 27px; line-height: 27px; font-weight: 400; text-align: left; }
    th { padding-left: 8px; }
    td { text-align: right; padding-right: 8px; font-size: 19px; }
    .chk { display: flex; align-items: center; height: 27px; gap: 8px; padding-left: 2px; }
    .chk input { appearance: none; flex: none; width: 19px; height: 19px; border: 1px solid #333; background: #fff; }
    footer { display: flex; align-items: center; margin-top: 9px; justify-content: space-between; }
    a { display: flex; align-items: center; gap: 7px; padding-left: 5px; color: #5b97dc; text-decoration: none; }
    .ok { width: 116px; height: 43px; border: 2px solid #0d6fc0; background: #e1e1e1; }
  `];
  render() {
    return html`
      <header>${icon("wdoc", "s22")}<h2>字数统计</h2><button aria-label="关闭">${icon("close", "s20")}</button></header>
      <div class="body">
        <div class="legend">统计信息<hr /></div>
        <table>${this.rows.map(([k, v]) => html`<tr><th scope="row">${k}</th><td>${v}</td></tr>`)}</table>
        <label class="chk"><input type="checkbox" />包括文本框、脚注和尾注(F)</label>
        <footer><a href="#tips">${icon("play")}操作技巧</a><button class="ok">关闭</button></footer>
      </div>`;
  }
}

@customElement("app-root")
class AppRoot extends LitElement {
  static styles = [shared, css`
    :host { display: flex; flex-direction: column; height: 100vh; position: relative; overflow: hidden; background: #000; padding: 0 7px 0 8px; font-family: "Open Sans", "Noto Sans CJK SC", sans-serif; }
    wp-title-bar, wp-menu-bar, wp-ribbon, wp-status-bar, wp-taskbar { flex: none; }
    wp-count-dialog { position: absolute; left: 813px; top: 332px; }
    .cursor { position: absolute; left: 1058px; top: 446px; width: 21px; height: 21px; fill: #fff; stroke: #000; }
    .meter { position: absolute; right: 7px; top: 175px; width: 15px; height: 88px; border-radius: 6px 0 0 6px; background: #4a4a56; padding: 33px 2px 9px 6px; }
    .meter i { display: block; height: 100%; background: repeating-linear-gradient(#0000 0 2px, #4a4a56 2px 3px), linear-gradient(#dfd84a, #7fcf6a 50%, #4fc0cf); }
    .strip { position: absolute; right: 7px; top: 912px; width: 6px; height: 30px; background: #f0cd3c; }
    .banner { position: absolute; right: -42px; bottom: 2px; width: 533px; height: 143px; border-radius: 72px; background: #9fddeb; }
    .banner svg { display: block; width: 533px; height: 143px; fill: #fff; }
    .mark { position: absolute; right: 6px; bottom: 8px; font: 37px/42px "Liberation Sans", sans-serif; color: #ffffffa0; text-shadow: 1px 1px 1px #5558, -1px -1px 1px #9995; }
  `];
  render() {
    return html`
      <wp-title-bar></wp-title-bar>
      <wp-menu-bar></wp-menu-bar>
      <wp-ribbon></wp-ribbon>
      <wp-workspace></wp-workspace>
      <wp-status-bar></wp-status-bar>
      <wp-taskbar></wp-taskbar>
      <wp-count-dialog></wp-count-dialog>
      <svg class="cursor" viewBox="0 0 24 24"><path stroke-width="1.500" d="M6 1l13 13h-7l4 7.500-3.500 1.500-3.500-8-3 3.500z"/></svg>
      <div class="meter"><i></i></div><div class="strip"></div>
      <div class="banner"><svg viewBox="0 0 533 143" aria-hidden="true">
        <path d="M84 56H80q-14 0-14 12v40q0 13 14 13h4zM89 57q12-5 12-20c0-12 3-17 8-17s10 6 10 18q0 10-2 18h18q8 0 8 8-1 28-7 44-4 13-14 13H89z"/>
        <ellipse cx="262" cy="71" rx="42" ry="54"/>
        <path d="M247 43h30M262 45v54M245 85V76q0-18 17-18t17 18v9" fill="none" stroke="#9fddeb" stroke-width="4"/>
        <path d="M420 22q6 0 8 9c3 12 6 20 14 22 8-3 16-2 17 2 2 8-14 18-15 28 2 12 2 28 1 38H430q-10-18-20 0H396c-1-10-1-26 1-38-1-10-17-20-15-28 1-4 9-5 17-2 8-2 11-10 14-22q2-9 7-9z"/>
      </svg></div>
      <div class="mark">CSDN @QQ3295391197</div>`;
  }
}
